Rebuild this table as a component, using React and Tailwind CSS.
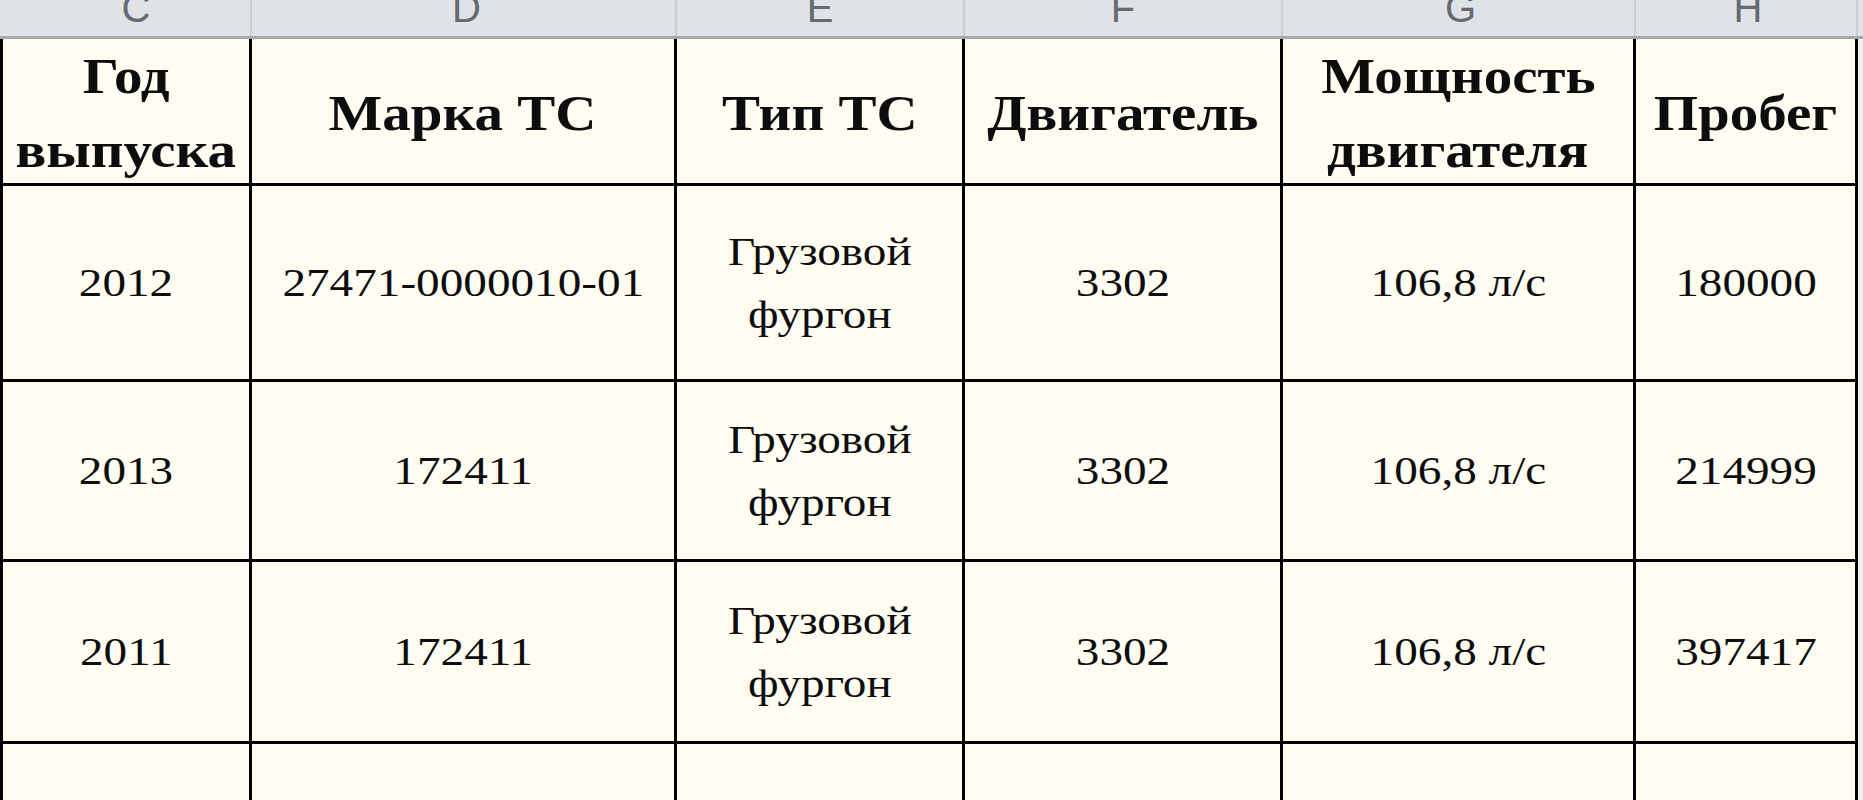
const cols = [
  { letter: 'C', w: 'w-[252px]', pad: 'pl-[22px]' },
  { letter: 'D', w: 'w-[425px]', pad: 'pl-[6px]' },
  { letter: 'E', w: 'w-[288px]', pad: '' },
  { letter: 'F', w: 'w-[318px]', pad: '' },
  { letter: 'G', w: 'w-[353px]', pad: 'pl-[4px]' },
  { letter: 'H', w: 'w-[222px]', pad: 'pl-[4px]' },
];

const headers = [
  ['Год', 'выпуска'],
  ['Марка ТС'],
  ['Тип ТС'],
  ['Двигатель'],
  ['Мощность', 'двигателя'],
  ['Пробег'],
];

const rows = [
  { h: 'h-[196px]', cells: [['2012'], ['27471-0000010-01'], ['Грузовой', 'фургон'], ['3302'], ['106,8 л/с'], ['180000']] },
  { h: 'h-[180px]', cells: [['2013'], ['172411'], ['Грузовой', 'фургон'], ['3302'], ['106,8 л/с'], ['214999']] },
  { h: 'h-[182px]', cells: [['2011'], ['172411'], ['Грузовой', 'фургон'], ['3302'], ['106,8 л/с'], ['397417']] },
  { h: 'h-[180px]', cells: [[], [], [], [], [], []] },
];

const Cell = ({ lines, width, first, header }) => (
  <div
    className={`${width} shrink-0 h-full flex flex-col items-center justify-center border-r-[3px] border-b-[3px] border-black bg-[#fffcf2] ${first ? 'border-l-[3px]' : ''} ${header ? 'pt-1' : ''}`}
  >
    {lines.map((t, i) => (
      <span
        key={i}
        className={`inline-block whitespace-nowrap text-[#0d0d0d] ${
          header
            ? 'font-bold text-[50px] scale-x-[1.14] ' + (lines.length > 1 ? 'leading-[74px]' : 'leading-none')
            : 'text-[40px] scale-x-[1.18] ' + (lines.length > 1 ? 'leading-[63px]' : 'leading-none')
        }`}
      >
        {t}
      </span>
    ))}
  </div>
);

export default function App() {
  return (
    <div className="w-[1863px] h-[800px] overflow-hidden bg-[#eef0f2] font-['Liberation_Serif',serif]">
      {/* column letters bar */}
      <div className="flex h-[39px] bg-[#dfe3e8] border-b-[3px] border-[#a4a9ae] overflow-hidden">
        {cols.map((c) => (
          <div
            key={c.letter}
            className={`${c.w} ${c.pad} shrink-0 flex items-end justify-center border-r-2 border-[#c9ced4] font-['Liberation_Sans',sans-serif] text-[40px] leading-none text-[#66696d] pb-[8px]`}
          >
            {c.letter}
          </div>
        ))}
      </div>

      {/* header row */}
      <div className="flex h-[147px]">
        {headers.map((lines, i) => (
          <Cell key={i} lines={lines} width={cols[i].w} first={i === 0} header />
        ))}
      </div>

      {rows.map((r, ri) => (
        <div key={ri} className={`flex ${r.h}`}>
          {r.cells.map((lines, i) => (
            <Cell key={i} lines={lines} width={cols[i].w} first={i === 0} />
          ))}
        </div>
      ))}
    </div>
  );
}
